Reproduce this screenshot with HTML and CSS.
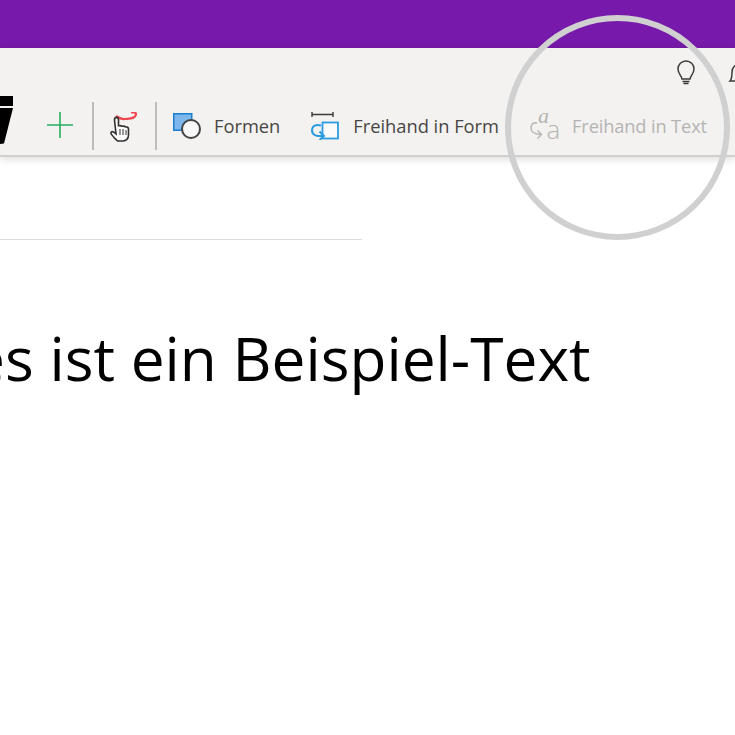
FILE: index.html
```html
<!DOCTYPE html>
<html lang="de">
<head>
<meta charset="utf-8">
<title>OneNote</title>
<link rel="stylesheet" href="styles.css">
</head>
<body>
<div class="app">
  <header class="titlebar"></header>
  <section class="ribbon">
    <div class="ribbon-top">
      <svg class="icon bulb" width="20" height="26" viewBox="0 0 20 26" fill="none" stroke="#3b3a39" stroke-width="1.500">
        <path d="M6 19c0-3-4-5-4-10a8 8 0 0 1 16 0c0 5-4 7-4 10zM6.500 21.500h7M7.500 23.500h5"/>
      </svg>
      <svg class="icon bell" width="24" height="26" viewBox="0 0 24 26" fill="none" stroke="#3b3a39" stroke-width="1.500">
        <path d="M2 20c2-2 2-5 2-9a8 8 0 0 1 16 0c0 4 0 7 2 9zM9 22a3 3 0 0 0 6 0"/>
      </svg>
    </div>
    <div class="tools">
      <svg class="icon pen" width="13" height="48" viewBox="0 0 13 48">
        <path d="M0 0h13v10H0z" fill="#000"/>
        <path d="M0 12h13L4 47.500 0 48z" fill="#000"/>
      </svg>
      <svg class="icon plus" width="26" height="26" viewBox="0 0 26 26" stroke="#27ae60" stroke-width="1.600">
        <path d="M0 13h26M13 0v26"/>
      </svg>
      <span class="sep sep-a"></span>
      <svg class="icon hand" width="28" height="30" viewBox="0 0 28 30" fill="none">
        <path d="M7 4C10 6 13 7.500 16 7c4-.5 11 0 11-5 0-1.500-3-2-5-1.500" stroke="#f0464f" stroke-width="2.200"/>
        <path d="M5.500 8c0-3.500 4-3.500 4 0v6.500c0-1 3.500-1.500 3.500.5 0-1 3.500-1.500 3.500.5.500-1 3-.5 3 1.500v6c0 3-2 6-5.500 6h-4c-3 0-4-3-7.500-6.500-1.500-1.500 0-3.500 2-2.500l2.500 2z" fill="#fbfbfb" stroke="#323130" stroke-width="1.600"/>
        <path d="M11 17v6M14 17v6M17 18v5" stroke="#323130" stroke-width="1"/>
      </svg>
      <span class="sep sep-b"></span>
      <svg class="icon shapes" width="28" height="28" viewBox="0 0 28 28">
        <rect x=".75" y=".75" width="18" height="16.500" fill="#7db7ec" stroke="#1b7fd0" stroke-width="1.500"/>
        <circle cx="18" cy="16" r="9" fill="#f8f8f8" stroke="#444" stroke-width="2"/>
      </svg>
      <span class="label label-shapes">Formen</span>
      <svg class="icon convert" width="29" height="30" viewBox="0 0 29 30" fill="none">
        <path d="M2 4.500h21M2 2v5M23 2v5" stroke="#3b3a39" stroke-width="1.400"/>
        <rect x="12.500" y="12.500" width="15.500" height="16" fill="#fafafa" stroke="#2d9be0" stroke-width="1.800"/>
        <path d="M11 15.500c-5-1.500-9 0-9 5s5 6 12 5.500M9.500 21.500l4.500 4.500-4.500 4" stroke="#2d9be0" stroke-width="2"/>
      </svg>
      <span class="label label-convert">Freihand in Form</span>
      <svg class="icon totext" width="30" height="30" viewBox="0 0 30 30" fill="none">
        <text class="glyph-ink" x="8" y="13">a</text>
        <text class="glyph-type" x="16.500" y="29">a</text>
        <path d="M7 13C3 12 1 15 1 18c0 4 4 6.500 11 6.500M7.500 20.500l4 4-4 4" stroke="#b5b4b3" stroke-width="1.400"/>
      </svg>
      <span class="label label-off">Freihand in Text</span>
    </div>
  </section>
  <main class="page">
    <div class="title-rule"></div>
    <p class="body-text">Dies ist ein Beispiel-Text</p>
  </main>
  <div class="spotlight"></div>
</div>
</body>
</html>
```

FILE: styles.css
```css
* { box-sizing: border-box; }
html, body { margin: 0; padding: 0; height: 100%; }
body { background: #fff; overflow: hidden; }

.app { position: relative; width: 735px; height: 735px; overflow: hidden; font-family: "Open Sans", "Noto Sans", sans-serif; }

.titlebar { height: 48px; background: #7719aa; }

.ribbon { height: 109px; background: #f3f2f1; border-bottom: 2px solid #d0cfce; box-shadow: 0 2px 8px rgba(0,0,0,.14); position: relative; }

.ribbon-top { height: 48px; display: flex; justify-content: flex-end; padding: 12px 0 0; width: 752px; gap: 32.500px; }
.icon { flex: none; display: block; }
.bell { margin-top: 1px; }

.tools { display: flex; align-items: center; height: 48px; white-space: nowrap; }
.plus { margin-left: 34px; margin-top: 10px; }
.sep { flex: none; width: 2px; height: 48px; background: #bdbcbb; margin-top: 12px; }
.sep-a { margin-left: 19px; }
.hand { margin-left: 15px; margin-top: 14px; }
.sep-b { margin-left: 18px; }
.shapes { margin-left: 16px; margin-top: 14px; }
.convert { margin-left: 30px; margin-top: 10px; }
.totext { margin-left: 31px; margin-top: 10px; }

.label { font-size: 18.300px; color: #484644; margin-top: 12px; line-height: 26px; }
.label-shapes { margin-left: 13px; }
.label-convert { margin-left: 14px; }
.label-off { margin-left: 12px; color: #b5b4b3; letter-spacing: -0.150px; }

.glyph-ink { font-family: "Liberation Serif", serif; font-style: italic; font-size: 22px; fill: #b5b4b3; }
.glyph-type { font-family: "Open Sans", sans-serif; font-weight: 300; font-size: 26px; fill: #b5b4b3; }

.page { padding-top: 82px; }
.title-rule { width: 362px; height: 1px; background: #dcdcdc; }
.body-text { margin: 77px 0 0 -88px; font-size: 60.400px; line-height: 82px; color: #000; white-space: nowrap; }

.spotlight { position: absolute; left: 505px; top: 15px; width: 225px; height: 225px; border: 6px solid #d0d0d0; border-radius: 50%; }
```
